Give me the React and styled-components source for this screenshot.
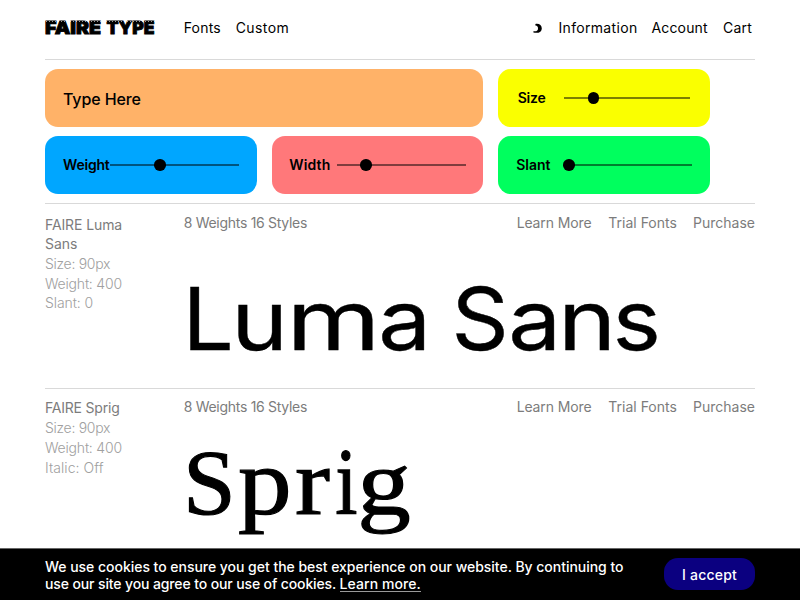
import React from "react";
import styled, { createGlobalStyle } from "styled-components";

const Global = createGlobalStyle`
  * { box-sizing: border-box; }
  body {
    margin: 0;
    background: #fff;
    color: #000;
    font: 400 14px/20px Inter, "Liberation Sans", sans-serif;
    overflow: hidden;
  }
`;

const Page = styled.div`
  display: flex;
  flex-direction: column;
  height: 600px;
  overflow: hidden;
`;

const Main = styled.main`
  flex: 1;
  min-height: 0;
  padding: 0 45px;
  overflow: hidden;
`;

const Header = styled.header`
  display: grid;
  grid-template-columns: 138.7px 1fr auto;
  height: 60px;
  padding-top: 18px;
  border-bottom: 1px solid #d9d9d9;
`;

const Logo = styled.a`
  display: block;
  width: 110px;
  height: 20px;
  svg { display: block; overflow: visible; }
  text { font: 900 18px Inter, sans-serif; }
`;

const Nav = styled.nav`
  display: flex;
`;

const Text = styled.span`
  display: block;
  white-space: nowrap;
  letter-spacing: ${(p) => p.$ls || 0}px;
  margin-left: ${(p) => p.$ml || 0}px;
`;

const NavItem = styled(Text)`
  width: ${(p) => p.$w}px;
`;

const MoonButton = styled.span`
  width: 27px;
  padding-top: 5px;
  svg { display: block; }
`;

const Controls = styled.section`
  display: grid;
  grid-template-columns: repeat(3, 211.7px);
  grid-auto-rows: 58px;
  gap: 9px 14.9px;
  height: 144px;
  padding-top: 9px;
  border-bottom: 1px solid #d9d9d9;
`;

const Card = styled.div`
  display: flex;
  align-items: center;
  border-radius: 13px;
  background: ${(p) => p.$bg};
  padding-left: ${(p) => p.$pad || 18}px;
  font-weight: 600;
`;

const TypeCard = styled(Card)`
  grid-column: span 2;
  font-size: 16px;
  font-weight: 500;
  letter-spacing: -0.1px;
  padding-top: 2px;
`;

const Label = styled(Text)`
  flex: none;
  width: ${(p) => p.$w}px;
`;

const Track = styled.div`
  position: relative;
  flex: none;
  width: ${(p) => p.$w}px;
  height: 2px;
  background: rgba(0, 0, 0, 0.5);
`;

const Thumb = styled.i`
  position: absolute;
  top: -4.75px;
  left: ${(p) => p.$x - 5.75}px;
  width: 11.5px;
  height: 11.5px;
  border-radius: 50%;
  background: #000;
`;

const Family = styled.section`
  display: grid;
  grid-template-columns: 138.7px 1fr;
  height: 185px;
  border-bottom: 1px solid #d9d9d9;
`;

const Meta = styled.div`
  padding-top: ${(p) => p.$top}px;
  line-height: 19.7px;
  color: #a0a0a0;
  font-weight: 300;
`;

const Name = styled(Text)`
  color: #7c7c7c;
  font-weight: 400;
`;

const Sample = styled.div`
  padding-top: ${(p) => p.$top}px;
  color: #7c7c7c;
`;

const Bar = styled.div`
  display: flex;
  justify-content: space-between;
`;

const Specimen = styled.h2`
  display: flex;
  margin: ${(p) => p.$top}px 0 0;
  padding-left: ${(p) => p.$left}px;
  color: #000;
  font: 400 ${(p) => p.$size}px/1 ${(p) => p.$font};
  -webkit-text-stroke: ${(p) => p.$stroke}px #000;
`;

const Glyph = styled.span`
  flex: none;
  display: block;
  white-space: pre;
  width: ${(p) => p.$w}px;
  transform: translateX(${(p) => p.$dx}px) scale(${(p) => p.$sx}, ${(p) => p.$sy || 1});
  transform-origin: 0 ${(p) => p.$base}em;
`;

const Cookies = styled.footer`
  display: flex;
  justify-content: space-between;
  height: 52px;
  padding: 9px 45px 0;
  background: #000;
  border-top: 1px solid #666;
  color: #fff;
  font-weight: 500;
  line-height: 17px;
`;

const Line = styled.div`
  display: flex;
`;

const Learn = styled(Text)`
  height: 17px;
  border-bottom: 1px solid #999;
`;

const Accept = styled.button`
  width: 91px;
  height: 32px;
  padding: 0;
  border: 0;
  border-radius: 14px;
  background: #0b0080;
  color: #fff;
  font: inherit;
  letter-spacing: 0.2px;
`;

// character, cell width, bearing shift, horizontal scale, vertical scale
const LUMA = [
  ["L", 47, -8.4, 1.05, 1],
  ["u", 56, -6.7, 1.11, 0.96],
  ["m", 87.5, -7.5, 1.24, 0.96],
  ["a", 52, -3.8, 1.09, 0.96],
  [" ", 22, 0, 1, 1],
  ["S", 56, -4.4, 1.03, 1],
  ["a", 53, -3.8, 1.09, 0.96],
  ["n", 52, -6.9, 1.14, 0.96],
  ["s", 42, -4.5, 1.06, 0.96],
];
const SPRIG = [
  ["S", 51, -5, 1.02, 1],
  ["p", 58, -1, 1.155, 1.03],
  ["r", 40.5, -2.1, 1.13, 1.03],
  ["i", 23.5, -2.8, 0.86, 1.03],
  ["g", 50, -3.8, 1.15, 1.0],
];

const Word = ({ glyphs, base, ...rest }) => (
  <Specimen {...rest}>
    {glyphs.map(([c, w, dx, sx, sy], i) => (
      <Glyph key={i} $w={w} $dx={dx} $sx={sx} $sy={sy} $base={base}>{c}</Glyph>
    ))}
  </Specimen>
);

const Slider = ({ bg, pad, label, ls, w, track, x }) => (
  <Card $bg={bg} $pad={pad}>
    <Label $w={w} $ls={ls}>{label}</Label>
    <Track $w={track}><Thumb $x={x} /></Track>
  </Card>
);

const FamilyBar = () => (
  <Bar>
    <Text $ls={-0.29}>8 Weights 16 Styles</Text>
    <Nav>
      <NavItem $w={91.7} $ls={-0.12}>Learn More</NavItem>
      <NavItem $w={84.7}>Trial Fonts</NavItem>
      <NavItem $w={62}>Purchase</NavItem>
    </Nav>
  </Bar>
);

export default function App() {
  return (
    <Page>
      <Global />
      <Main>
        <Header>
          <Logo>
            <svg width="110" height="20" viewBox="0 0 110 20" shapeRendering="crispEdges">
              <defs>
                <pattern id="notch" width="3" height="3" patternUnits="userSpaceOnUse">
                  <rect x="1" width="1" height="3" fill="#fff" fillOpacity="0.6" />
                </pattern>
              </defs>
              <g stroke="#000" strokeWidth="0.9">
                <text x="0" y="16" textLength="56" lengthAdjust="spacingAndGlyphs">FAIRE</text>
                <text x="61.5" y="16" textLength="48" lengthAdjust="spacingAndGlyphs">TYPE</text>
              </g>
              <rect width="110" height="1" y="3" fill="url(#notch)" />
            </svg>
          </Logo>
          <Nav>
            <NavItem $w={52} $ls={0.2}>Fonts</NavItem>
            <NavItem $w={60} $ls={0.4}>Custom</NavItem>
          </Nav>
          <Nav>
            <MoonButton>
              <svg width="12" height="12" viewBox="0 0 12 12">
                <path d="M3.4 1C7 .2 9.8 2.2 9.8 5.4S7 10.6 1.4 9.6V8.2C4.8 8.6 6 7.4 6 5.4S5.4 2.8 3.4 2.4Z" fill="#000" />
              </svg>
            </MoonButton>
            <NavItem $w={93} $ls={0.32}>Information</NavItem>
            <NavItem $w={71.5} $ls={0.15}>Account</NavItem>
            <NavItem $w={32} $ls={0.2}>Cart</NavItem>
          </Nav>
        </Header>
        <Controls>
          <TypeCard $bg="#ffb268">Type Here</TypeCard>
          <Slider bg="#faff00" pad={19.5} label="Size" ls={-0.2} w={46.5} track={126} x={29.5} />
          <Slider bg="#00a6ff" pad={18} label="Weight" ls={-0.2} w={47} track={129} x={50} />
          <Slider bg="#ff787a" pad={17.7} label="Width" ls={0.15} w={47.5} track={129} x={29} />
          <Slider bg="#00ff5e" pad={18} label="Slant" ls={0} w={48} track={128} x={5} />
        </Controls>
        <Family>
          <Meta $top={10.5}>
            <Name $ls={-0.1}>FAIRE Luma</Name>
            <Name>Sans</Name>
            <Text $ls={-0.3}>Size: 90px</Text>
            <Text $ls={-0.2}>Weight: 400</Text>
            <Text $ls={-0.1}>Slant: 0</Text>
          </Meta>
          <Sample $top={9.3}>
            <FamilyBar />
            <Word glyphs={LUMA} base={0.864} $top={43.2} $left={7.5} $size={86.5} $stroke={0.4} $font='Inter, sans-serif' />
          </Sample>
        </Family>
        <Family>
          <Meta $top={9.4}>
            <Name $ls={-0.2}>FAIRE Sprig</Name>
            <Text $ls={-0.3}>Size: 90px</Text>
            <Text $ls={-0.2}>Weight: 400</Text>
            <Text $ls={0.05}>Italic: Off</Text>
          </Meta>
          <Sample $top={8}>
            <FamilyBar />
            <Word glyphs={SPRIG} base={0.84} $top={18.5} $left={4.5} $size={93} $stroke={1.1} $font='"Liberation Serif", serif' />
          </Sample>
        </Family>
      </Main>
      <Cookies>
        <div>
          <Text $ls={-0.03}>We use cookies to ensure you get the best experience on our website. By continuing to</Text>
          <Line>
            <Text $ls={-0.12}>use our site you agree to our use of cookies.</Text>
            <Learn $ml={3.4} $ls={0.08}>Learn more.</Learn>
          </Line>
        </div>
        <Accept>I accept</Accept>
      </Cookies>
    </Page>
  );
}
